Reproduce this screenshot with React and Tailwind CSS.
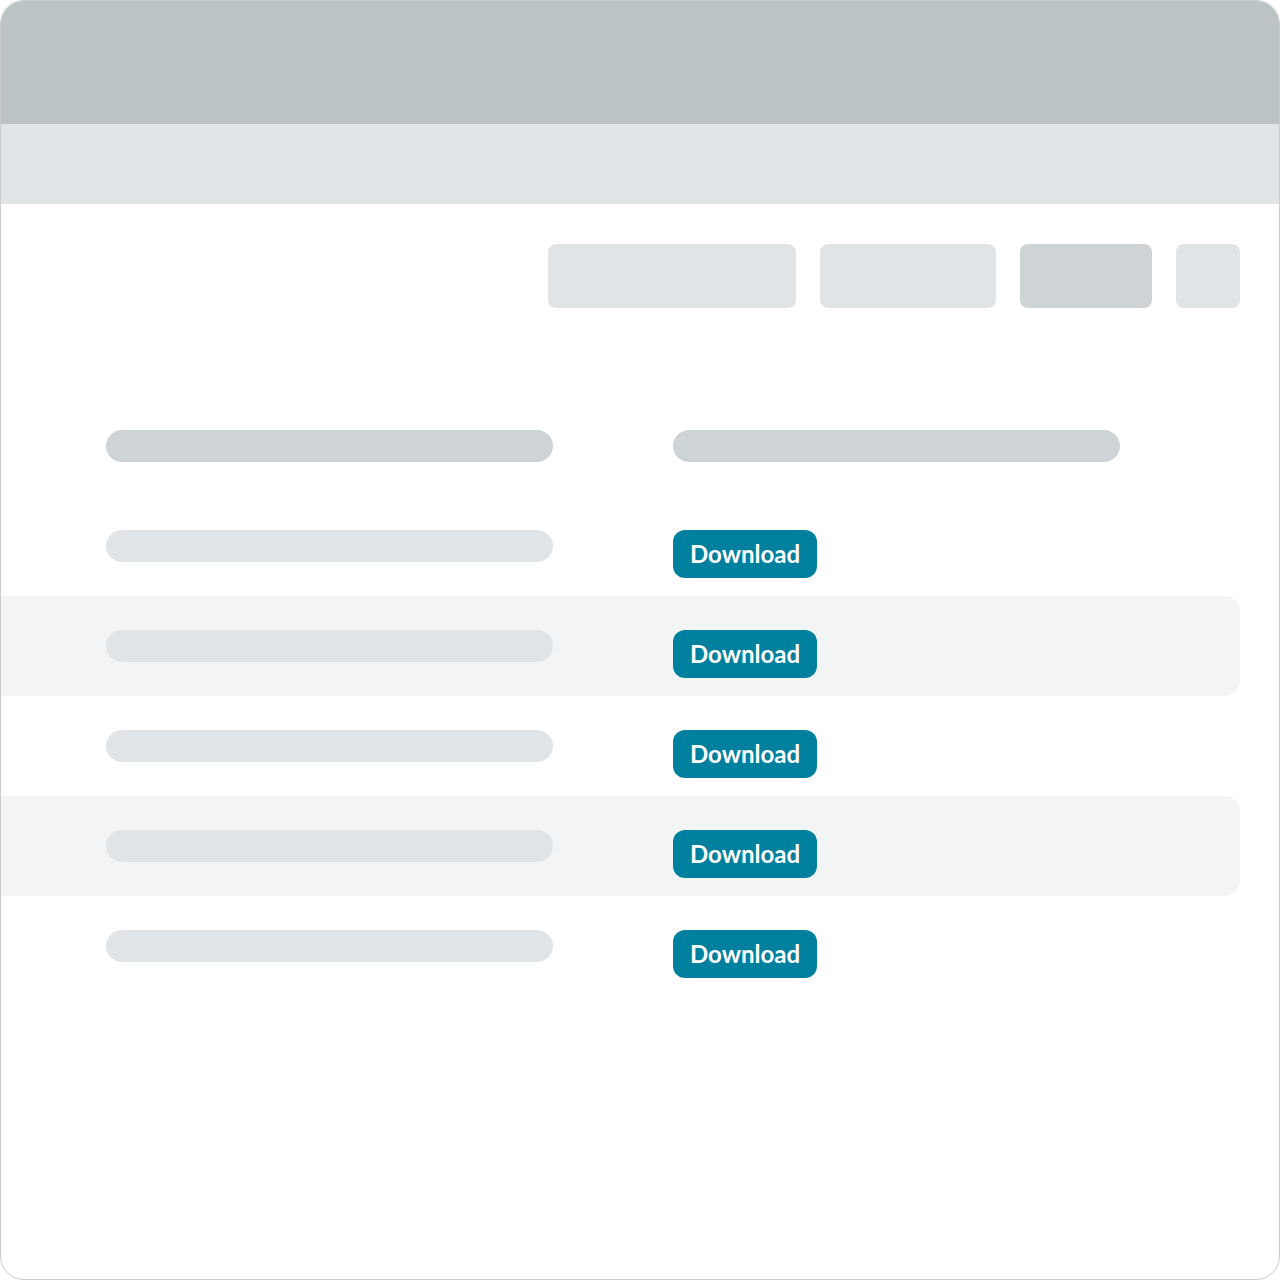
import React from 'react';

const rows = [false, true, false, true, false];

const DownloadButton = () => (
    <button
        type="button"
        className="flex h-12 w-[144px] items-center justify-center rounded-[12px] bg-[#00809f] text-[24px] font-bold text-white"
        style={{ fontFamily: 'Lato, "Open Sans", sans-serif' }}
    >
        Download
    </button>
);

const App = () => {
    return (
        <div className="h-[1280px] w-[1280px] bg-white">
            <div className="flex h-full w-full flex-col overflow-hidden rounded-[24px] border border-[#c9cbcc] bg-white">
                <div className="h-[123px] shrink-0 bg-[#bcc3c5]" />
                <div className="h-[80px] shrink-0 bg-[#e1e4e7]" />

                {/* toolbar */}
                <div className="flex justify-end gap-6 pr-[39px] pt-10">
                    <div className="h-16 w-[248px] rounded-[8px] bg-[#e1e4e7]" />
                    <div className="h-16 w-[176px] rounded-[8px] bg-[#e1e4e7]" />
                    <div className="h-16 w-[132px] rounded-[8px] bg-[#ced3d6]" />
                    <div className="h-16 w-16 rounded-[8px] bg-[#e1e4e7]" />
                </div>

                {/* table */}
                <div className="mt-[88px] flex flex-col pr-[39px]">
                    <div className="flex h-[100px] gap-[120px] pl-[105px] pt-[34px]">
                        <div className="h-8 w-[447px] rounded-full bg-[#ced3d6]" />
                        <div className="h-8 w-[447px] rounded-full bg-[#ced3d6]" />
                    </div>
                    {rows.map((striped, i) => (
                        <div
                            key={i}
                            className={
                                striped
                                    ? 'flex h-[100px] gap-[120px] rounded-r-[16px] bg-[#f3f4f6] pl-[105px] pt-[34px]'
                                    : 'flex h-[100px] gap-[120px] pl-[105px] pt-[34px]'
                            }
                        >
                            <div className="h-8 w-[447px] rounded-full bg-[#e1e4e7]" />
                            <DownloadButton />
                        </div>
                    ))}
                </div>
            </div>
        </div>
    );
};

export default App;
